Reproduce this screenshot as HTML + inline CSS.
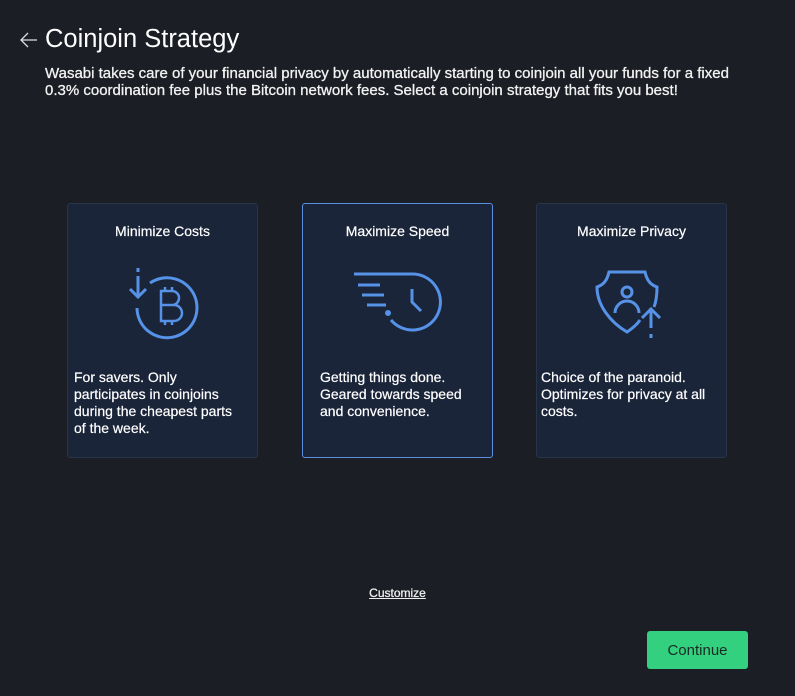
<!DOCTYPE html>
<html><head><meta charset="utf-8"><style>
body{margin:0;width:795px;height:696px;background:#1b1e24;font-family:"Liberation Sans",sans-serif;color:#fff;position:relative;overflow:hidden}
.abs{position:absolute}
h1{position:absolute;left:45px;top:25px;margin:0;font-size:25.5px;font-weight:normal}
.desc{left:45px;top:65px;font-size:15px;line-height:17px;color:#f2f2f2;width:720px;-webkit-text-stroke:0.3px #f2f2f2}
.card{position:absolute;top:203px;width:189px;height:253px;background:#1b2539;border:1px solid #283448;border-radius:3px}
.card.sel{border-color:#5a8fe0}
.card .t{position:absolute;top:19px;width:100%;text-align:center;font-size:14px;-webkit-text-stroke:0.2px #fff}
.card .d{position:absolute;top:165px;left:6px;right:10px;font-size:14px;line-height:17px;-webkit-text-stroke:0.2px #fff}
.cust{left:0;width:795px;top:586px;text-align:center;font-size:12px;text-decoration:underline;color:#eee;-webkit-text-stroke:0.3px #eee}
.btn{left:647px;top:631px;width:101px;height:38px;background:#33d07f;border-radius:3px;color:#1a2a22;font-size:15px;text-align:center;line-height:40px}
svg{position:absolute;left:0;top:0}
</style></head><body>
<h1>Coinjoin Strategy</h1>
<div class="abs desc">Wasabi takes care of your financial privacy by automatically starting to coinjoin all your funds for a fixed<br>0.3% coordination fee plus the Bitcoin network fees. Select a coinjoin strategy that fits you best!</div>
<div class="card" style="left:67px"><div class="t">Minimize Costs</div><div class="d">For savers. Only participates in coinjoins during the cheapest parts of the week.</div></div>
<div class="card sel" style="left:302px"><div class="t">Maximize Speed</div><div class="d" style="left:17px">Getting things done. Geared towards speed and convenience.</div></div>
<div class="card" style="left:536px"><div class="t">Maximize Privacy</div><div class="d" style="left:4px">Choice of the paranoid. Optimizes for privacy at all costs.</div></div>
<div class="abs cust">Customize</div>
<div class="abs btn">Continue</div>
<svg width="795" height="696" fill="none" stroke="#5592e8" stroke-width="3">
<path d="M37 40 H21 M28 33 L21 40 L28 47" stroke="#ddd" stroke-width="1.3"/>
<path d="M138 268 V272 M138 276 V297 M130 289 L138 297 L146 289"/>
<path d="M150 283 A30 30 0 1 1 137 308"/>
<path d="M161 291 H172 A7 7 0 0 1 172 305 H161 Z M161 305 H174 A8 8 0 0 1 174 321 H161 Z M165 287 V291 M172 287 V291 M165 321 V325 M172 321 V325" stroke-width="2.5"/>
<path d="M354 274 H412 A28 28 0 1 1 391 320"/>
<path d="M358 285 H380 M362 295 H384 M367 305 H386 M412 289 V302 L421 311"/>
<circle cx="388" cy="313" r="1.5" fill="#5592e8"/>
<path d="M640 320 C636 326 630 330 627 332 C610 322 597 305 597 287 C603 285 607 281 609 272 H645 C647 281 651 285 657 287 C657 296 656 302 654 307"/>
<circle cx="627" cy="292" r="5"/>
<path d="M615 313 A12 12 0 0 1 639 313"/>
<path d="M651 310 V328 M642 318 L651 309 L660 318 M651 334 V338"/>
</svg>
</body></html>
